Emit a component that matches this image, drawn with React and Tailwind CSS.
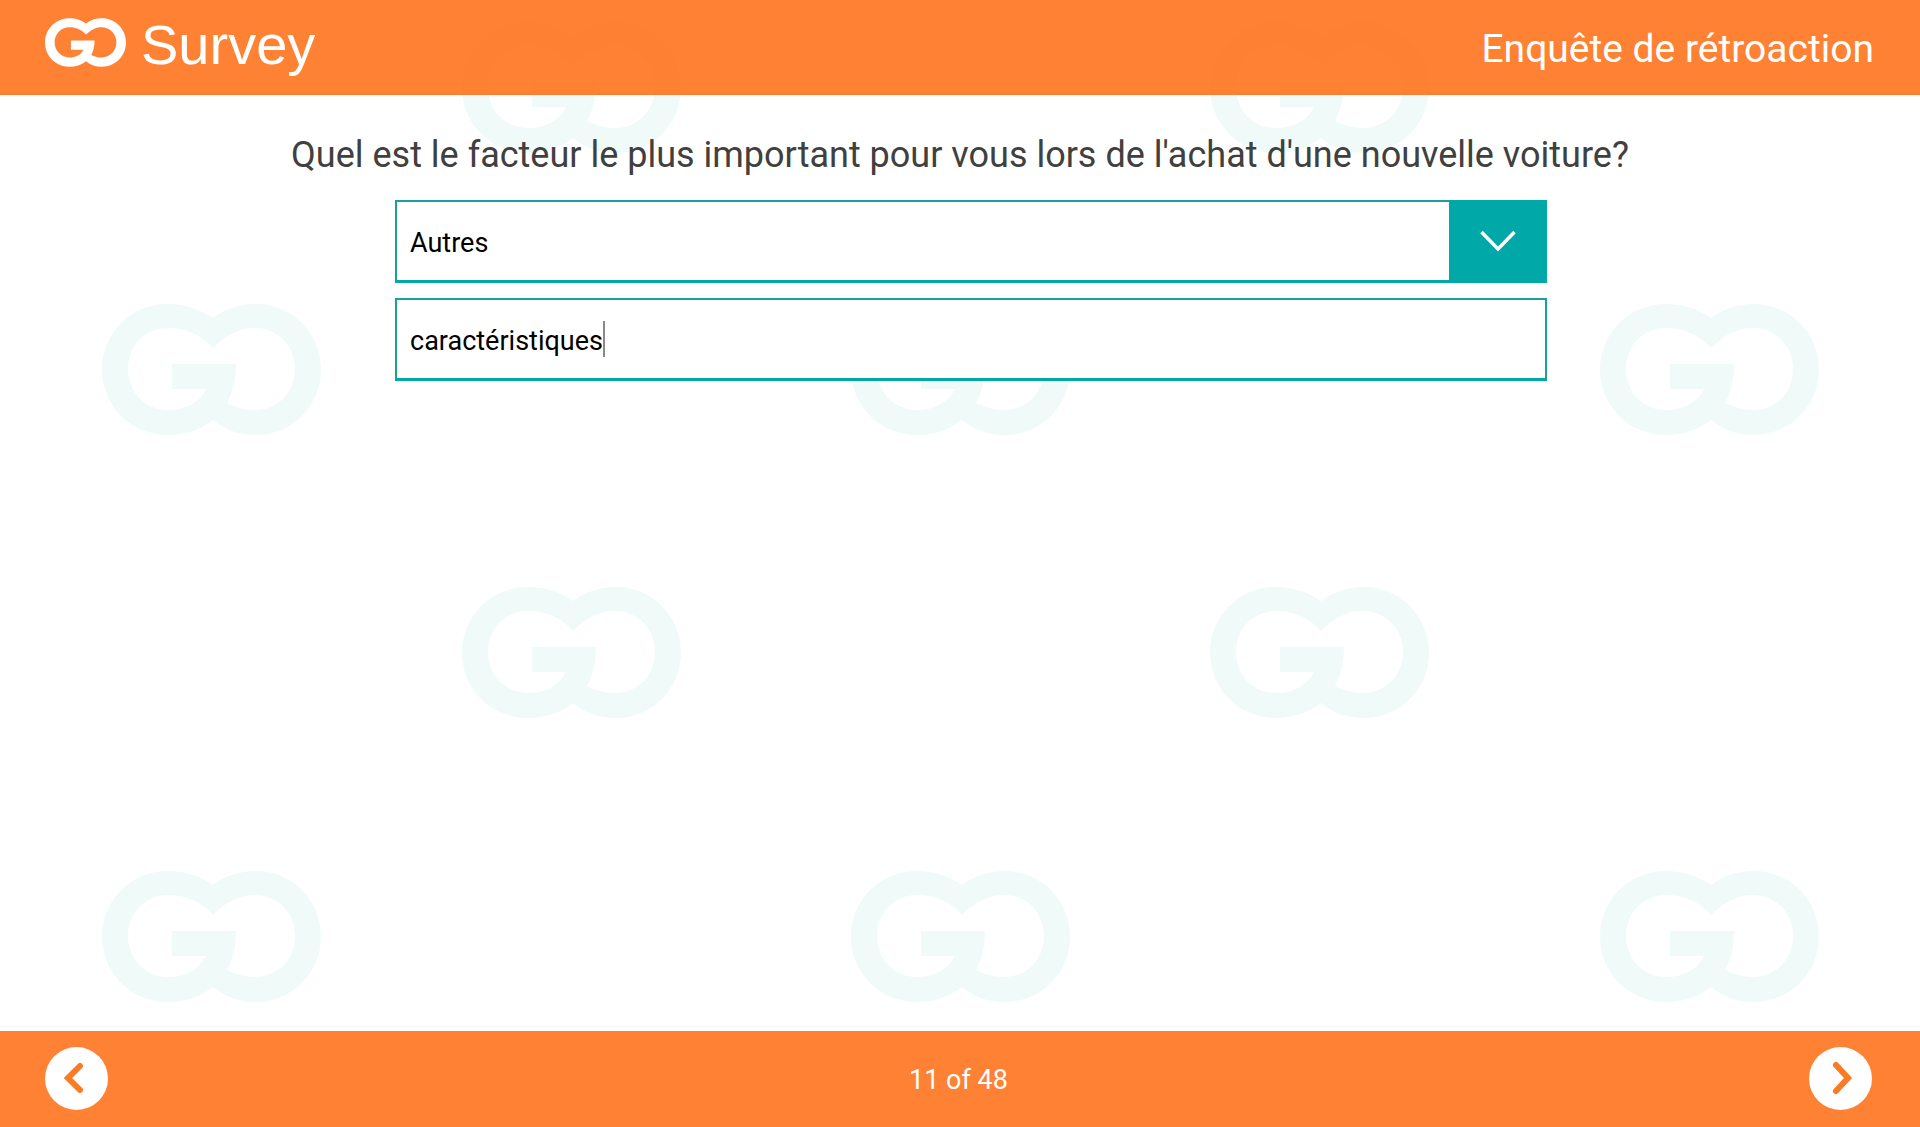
import { useState } from "react";

const LOGO_PATH =
  "M111 14C98 5 83 0 66 0C29 0 0 29 0 65.500C0 102 29 131 66 131C83 131 98 126 111 116C123 126 137 131 154 131C190 131 219 102 219 65.500C219 29 190 0 154 0C137 0 123 5 111 14Z" +
  "M111 44C100 31 84 24 66 24C43 24 26 42 26 65C26 88 43 106 66 106C83 106 97 99 104 85H70V60H134C134 75 131 88 125 99C133 103 143 106 153 106C176 106 193 88 193 65C193 42 176 24 153 24C137 24 124 31 111 44Z";

const MARKS = [
  [462, 22],
  [1210, 22],
  [102, 304],
  [851, 304],
  [1600, 304],
  [462, 587],
  [1210, 587],
  [102, 871],
  [851, 871],
  [1600, 871],
];

function Logo({ className }) {
  return (
    <svg viewBox="0 0 219 131" className={className} fill="currentColor" fillRule="evenodd" aria-hidden="true">
      <path d={LOGO_PATH} />
    </svg>
  );
}

function Backdrop() {
  return (
    <svg
      viewBox="0 0 1920 1127"
      preserveAspectRatio="xMidYMid slice"
      className="absolute inset-0 -z-10 h-full w-full text-[#f0fbf9]"
      fill="currentColor"
      fillRule="evenodd"
      aria-hidden="true"
    >
      {MARKS.map(([x, y]) => (
        <path key={`${x}-${y}`} d={LOGO_PATH} transform={`translate(${x} ${y})`} />
      ))}
    </svg>
  );
}

function NavButton({ label, points }) {
  return (
    <button type="button" aria-label={label} className="size-[63px] rounded-full bg-white text-[#f97c24]">
      <svg viewBox="0 0 63 63" className="size-full" fill="none" stroke="currentColor" strokeWidth="6" strokeLinecap="round" strokeLinejoin="miter">
        <polyline points={points} />
      </svg>
    </button>
  );
}

export default function App() {
  const [factor, setFactor] = useState("Autres");
  const [detail, setDetail] = useState("caractéristiques");

  return (
    <div className="relative isolate flex min-h-screen flex-col bg-white font-['Roboto',sans-serif]">
      <Backdrop />

      <header className="flex h-[95px] items-center justify-between border-b-2 border-[#fd7e2c] bg-[#ff7017]/88 bg-clip-padding pr-[46px] pl-[45px] text-white">
        <div className="flex items-center gap-[15px] pb-1">
          <Logo className="mb-1 h-[49px] w-[81px]" />
          <span className="font-['Liberation_Sans',sans-serif] text-[56px] leading-[60px]">Survey</span>
        </div>
        <span className="pt-1 text-[39px] leading-[48px]">Enquête de rétroaction</span>
      </header>

      <main className="flex flex-1 flex-col items-center">
        <h1 className="mt-9 pt-0.5 text-center text-[36px] leading-[44px] text-[#404040]">
          Quel est le facteur le plus important pour vous lors de l'achat d'une nouvelle voiture?
        </h1>
        <form className="mt-[23px] ml-[22px] flex w-3/5 flex-col gap-[15px] text-[27px] text-black">
          <div className="relative flex h-[83px]">
            <select
              aria-label="Facteur"
              value={factor}
              onChange={(e) => setFactor(e.target.value)}
              className="w-full appearance-none border-2 border-b-3 border-[#1c9f9f] border-b-[#00a8a8] bg-white pt-1 pr-[110px] pl-[13px] outline-none"
            >
              <option>Autres</option>
            </select>
            <span className="pointer-events-none absolute inset-y-0 right-0 flex w-[98px] items-center justify-center bg-[#00a8a8] text-white">
              <svg viewBox="0 0 36 22" className="mb-0.5 h-[22px] w-9" fill="none" stroke="currentColor" strokeWidth="3.500">
                <polyline points="1.5,2 18,19 34.5,2" />
              </svg>
            </span>
          </div>
          <label className="flex h-[83px] items-center border-2 border-b-3 border-[#1c9f9f] border-b-[#00a8a8] bg-white pl-[13px]">
            <input
              type="text"
              aria-label="Précisez"
              value={detail}
              onChange={(e) => setDetail(e.target.value)}
              className="[field-sizing:content] bg-transparent pt-1 outline-none"
            />
            <span className="h-9 w-0.5 bg-[#8a8a8a]" />
          </label>
        </form>
      </main>

      <div className="mb-1 h-px bg-[#f0f6fa]" />
      <footer className="grid h-24 grid-cols-3 items-center bg-[#ff7017]/88 pr-12 pb-0.5 pl-[45px] text-white">
        <NavButton label="Précédent" points="35,19 23,31 35,43" />
        <p className="pt-1 text-center text-[27px] leading-8">11 of 48</p>
        <div className="flex justify-end">
          <NavButton label="Suivant" points="27,18 39,31 27,44" />
        </div>
      </footer>
    </div>
  );
}
